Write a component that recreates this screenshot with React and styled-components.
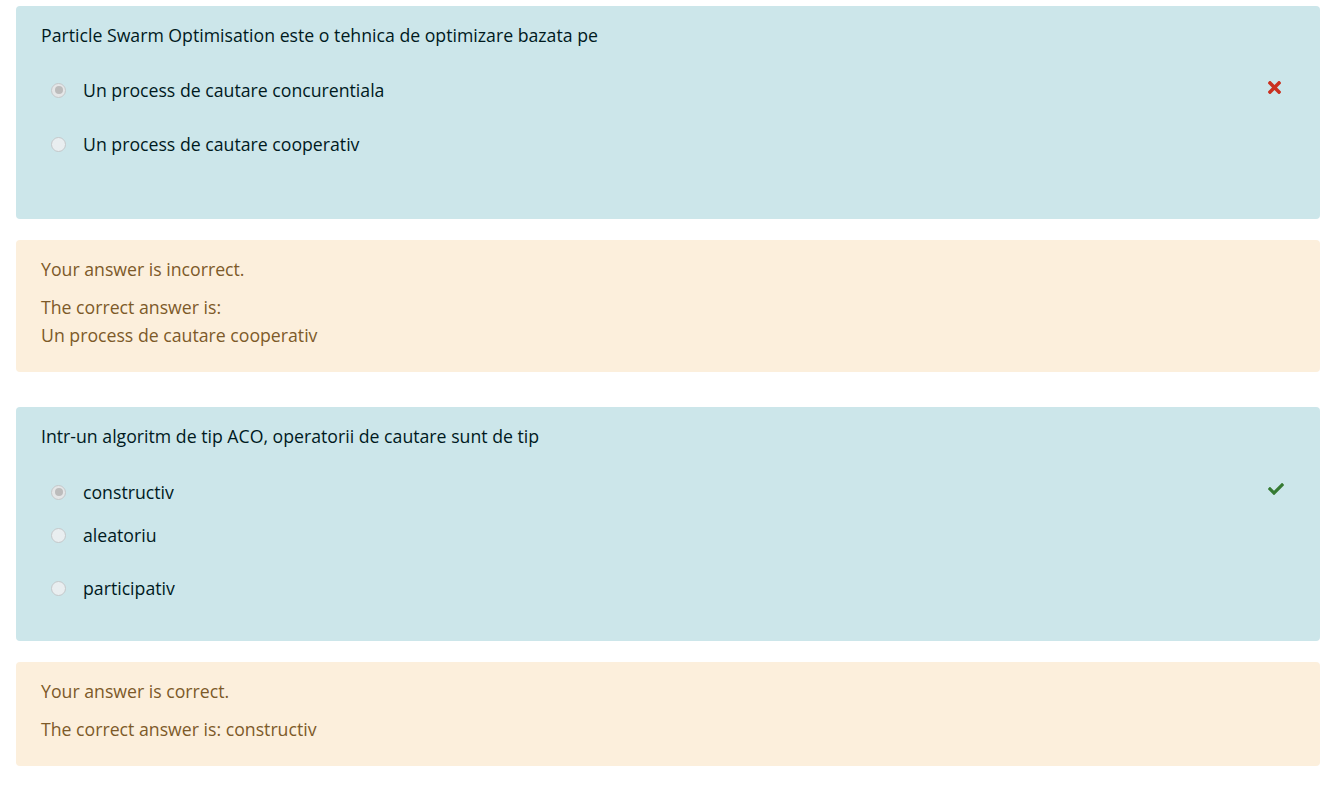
import styled, { createGlobalStyle } from "styled-components";
import { FaTimes, FaCheck } from "react-icons/fa";

const GlobalStyle = createGlobalStyle`
  body {
    margin: 0;
    background: #fff;
    font-family: "Open Sans", "Noto Sans", sans-serif;
    font-size: 17.7px;
  }
`;

const Page = styled.div`
  padding: 6px 14px 20px 16px;
  display: flex;
  flex-direction: column;
`;

const Question = styled.div`
  display: flex;
  flex-direction: column;
`;

const Formulation = styled.div`
  background-color: #cce6ea;
  color: #001a1e;
  border-radius: 4px;
  padding: 15px 25px ${(p) => p.$bottom}px;
  line-height: 28px;
`;

const QText = styled.div`
  margin: 0;
`;

const Answer = styled.div`
  display: flex;
  align-items: center;
  margin-top: ${(p) => p.$gap}px;
  height: 28px;
`;

const Radio = styled.span`
  width: 15px;
  height: 15px;
  box-sizing: border-box;
  border-radius: 50%;
  margin-left: 10px;
  margin-right: 17px;
  border: 1.5px solid #c4c8ca;
  background: ${(p) => (p.$checked ? "#e4e6e7" : "#e9eef0")};
  display: flex;
  align-items: center;
  justify-content: center;

  &::after {
    content: "";
    display: ${(p) => (p.$checked ? "block" : "none")};
    width: 8px;
    height: 8px;
    border-radius: 50%;
    background: #bcbcbc;
  }
`;

const Mark = styled.span`
  margin-left: auto;
  margin-right: 11px;
  display: flex;
  align-items: center;
  color: ${(p) => (p.$ok ? "#357a32" : "#ca3120")};
  transform: translateY(-3px);
`;

const Outcome = styled.div`
  background-color: #fcefdc;
  color: #7d5a29;
  border-radius: 4px;
  padding: 15px 25px 23px;
  line-height: 28px;
  margin-top: 21px;

  p {
    margin: 0;
  }
  p + p {
    margin-top: 10px;
  }
`;

const Spacer = styled.div`
  height: 35px;
`;

const questions = [
  {
    text: "Particle Swarm Optimisation este o tehnica de optimizare bazata pe",
    bottom: 61,
    ok: false,
    answers: [
      { label: "Un process de cautare concurentiala", gap: 27, checked: true },
      { label: "Un process de cautare cooperativ", gap: 26 },
    ],
    feedback: "Your answer is incorrect.",
    correct: ["The correct answer is:", "Un process de cautare cooperativ"],
  },
  {
    text: "Intr-un algoritm de tip ACO, operatorii de cautare sunt de tip",
    bottom: 39,
    ok: true,
    answers: [
      { label: "constructiv", gap: 28, checked: true },
      { label: "aleatoriu", gap: 15 },
      { label: "participativ", gap: 25 },
    ],
    feedback: "Your answer is correct.",
    correct: ["The correct answer is: constructiv"],
  },
];

export default function App() {
  return (
    <>
      <GlobalStyle />
      <Page>
        {questions.map((q, i) => (
          <Question key={i}>
            {i > 0 && <Spacer />}
            <Formulation $bottom={q.bottom}>
              <QText>{q.text}</QText>
              {q.answers.map((a, j) => (
                <Answer key={j} $gap={a.gap}>
                  <Radio $checked={a.checked} />
                  <span>{a.label}</span>
                  {a.checked && (
                    <Mark $ok={q.ok}>
                      {q.ok ? <FaCheck size={16} /> : <FaTimes size={19} />}
                    </Mark>
                  )}
                </Answer>
              ))}
            </Formulation>
            <Outcome>
              <p>{q.feedback}</p>
              <p>
                {q.correct.map((c, k) => (
                  <span key={k}>
                    {k > 0 && <br />}
                    {c}
                  </span>
                ))}
              </p>
            </Outcome>
          </Question>
        ))}
      </Page>
    </>
  );
}
